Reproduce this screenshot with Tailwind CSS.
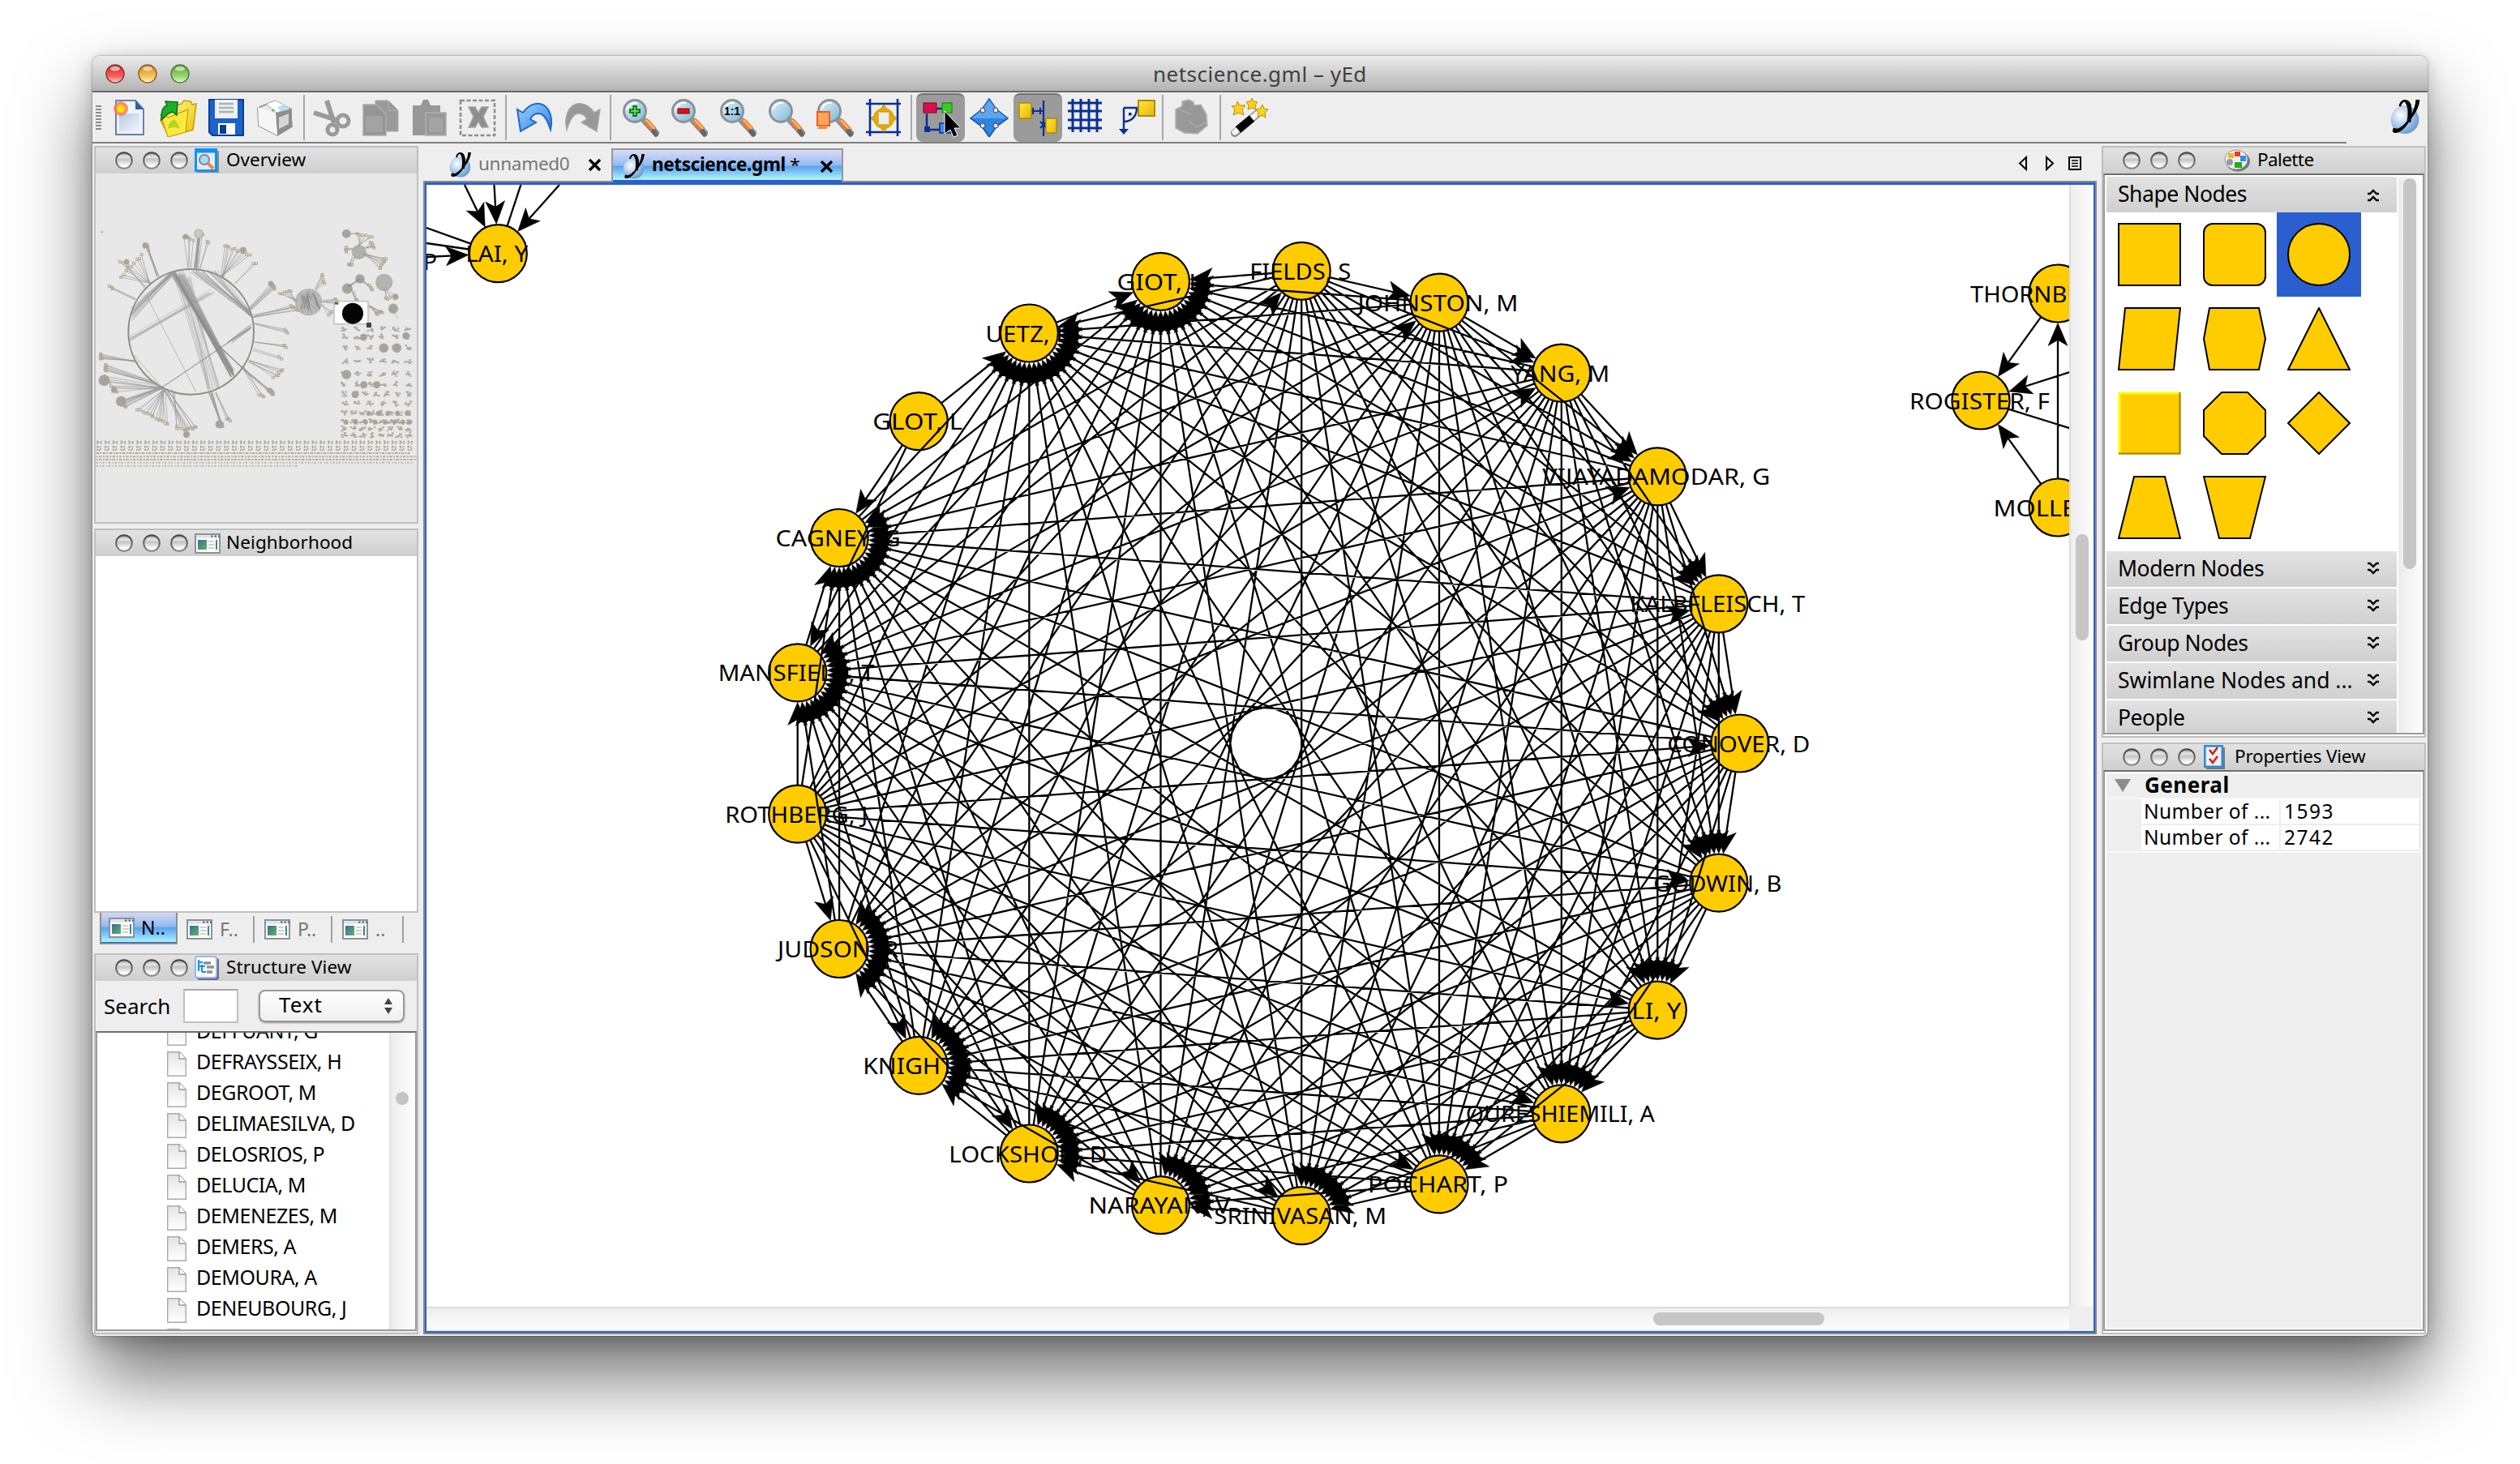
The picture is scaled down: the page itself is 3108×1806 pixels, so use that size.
<!DOCTYPE html>
<html lang="en">
<head>
<meta charset="utf-8">
<title>netscience.gml – yEd</title>
<script src="https://cdn.jsdelivr.net/npm/@tailwindcss/browser@4"></script>
</head>
<body class="bg-white w-[3108px] h-[1806px] overflow-hidden font-['Noto_Sans','Open_Sans',sans-serif] text-black">
<svg class="absolute w-0 h-0">
  <defs>
    <linearGradient id="gRed" x1="0" y1="0" x2="0" y2="1"><stop offset="0" stop-color="#7d1515"/><stop offset=".3" stop-color="#e8403f"/><stop offset=".65" stop-color="#f8605c"/><stop offset="1" stop-color="#ffd8d4"/></linearGradient>
    <linearGradient id="gAmb" x1="0" y1="0" x2="0" y2="1"><stop offset="0" stop-color="#9a5510"/><stop offset=".3" stop-color="#eaa035"/><stop offset=".65" stop-color="#f8c560"/><stop offset="1" stop-color="#fff7c0"/></linearGradient>
    <linearGradient id="gGrn" x1="0" y1="0" x2="0" y2="1"><stop offset="0" stop-color="#3a6f1c"/><stop offset=".3" stop-color="#78bd50"/><stop offset=".65" stop-color="#98d870"/><stop offset="1" stop-color="#e8ffd0"/></linearGradient>
    <linearGradient id="gGray" x1="0" y1="0" x2="0" y2="1"><stop offset="0" stop-color="#8a8a8a"/><stop offset=".25" stop-color="#e6e6e6"/><stop offset=".45" stop-color="#c4c4c4"/><stop offset=".8" stop-color="#fafafa"/><stop offset="1" stop-color="#ffffff"/></linearGradient>
    <linearGradient id="gRing" x1="0" y1="0" x2="0" y2="1"><stop offset="0" stop-color="#444"/><stop offset="1" stop-color="#8a8a8a"/></linearGradient>
    <radialGradient id="gBall" cx=".35" cy=".35" r=".75"><stop offset="0" stop-color="#fff"/><stop offset=".5" stop-color="#a9c8ea"/><stop offset="1" stop-color="#5b93cf"/></radialGradient>
    <linearGradient id="gPage" x1="0" y1="0" x2="1" y2="1"><stop offset="0" stop-color="#b9c8e4"/><stop offset="1" stop-color="#f0f6ff"/></linearGradient>
    <linearGradient id="gFold" x1="0" y1="0" x2="1" y2="1"><stop offset="0" stop-color="#fff9a0"/><stop offset="1" stop-color="#eec400"/></linearGradient>
    <linearGradient id="gLens" x1="0" y1="0" x2="1" y2="1"><stop offset="0" stop-color="#e0f3fa"/><stop offset="1" stop-color="#7cb6d8"/></linearGradient>
    <linearGradient id="gUndo" x1="0" y1="0" x2="1" y2="1"><stop offset="0" stop-color="#9fd4ff"/><stop offset="1" stop-color="#2a7fe0"/></linearGradient>
    <linearGradient id="gYel" x1="0" y1="0" x2="1" y2="1"><stop offset="0" stop-color="#ffe640"/><stop offset="1" stop-color="#e8b800"/></linearGradient>
    <linearGradient id="gDoc" x1="0" y1="0" x2="0" y2="1"><stop offset="0" stop-color="#e4e4e4"/><stop offset="1" stop-color="#fff"/></linearGradient>
    <linearGradient id="gWin" x1="0" y1="0" x2="1" y2="1"><stop offset="0" stop-color="#3a6aa0"/><stop offset="1" stop-color="#5cb860"/></linearGradient>

    <symbol id="dot" viewBox="0 0 22 22"><circle cx="11" cy="11" r="9.8" fill="url(#gGray)" stroke="url(#gRing)" stroke-width="2"/></symbol>
    <symbol id="ylogo" viewBox="0 0 36 42"><circle cx="18" cy="25" r="17" fill="url(#gBall)"/><path d="M12 9c1-6 5-8 9-6 5 3 4 13 3 25" fill="none" stroke="#000" stroke-width="2.6"/><path d="M16 2c9-2 11 6 10 17l-2 8-4 4c2-12 3-24-4-29zM30 1h6c-1 9-5 16-9 21-5 8-10 15-16 18-4 2-7 1-8-1l1-4 5 1c8-3 13-11 17-18 3-6 5-11 5-17z"/></symbol>
    <symbol id="mag" viewBox="0 0 48 48"><path d="M29 28l14 15" stroke="#8a8a8a" stroke-width="8" stroke-linecap="round"/><path d="M27 25l7 8" stroke="#999" stroke-width="5"/><path d="M31 28l10 11" stroke="#f4792a" stroke-width="6.5"/><path d="M31 27l10 11" stroke="#ffc080" stroke-width="2"/><path d="M40 41l3 4" stroke="#666" stroke-width="5.5" stroke-linecap="round"/><circle cx="17" cy="16" r="13.5" fill="url(#gLens)" stroke="#8c9296" stroke-width="3"/><path d="M7 14c2-6 8-9 13-8" fill="none" stroke="#fff" stroke-width="2"/></symbol>
    <symbol id="win" viewBox="0 0 32 25"><rect x="1" y="1" width="30" height="23" fill="#fdfdfd" stroke="#8c9299" stroke-width="2"/><path d="M2 4h28" stroke="#dfe3ea" stroke-width="3.5"/><path d="M20 3.5h2.5m2 0h2.5m2 0h2" stroke="#4c5f85" stroke-width="2"/><rect x="4" y="8" width="11" height="12" fill="url(#gWin)"/><path d="M17 10h7M17 14h8M17 18h7" stroke="#d0d0d0" stroke-width="2"/><path d="M27 8v12" stroke="#3a8a80" stroke-width="2"/></symbol>
    <symbol id="file" viewBox="0 0 24 31"><path d="M.7.7h14.6L23.3 9v21.3H.7z" fill="url(#gDoc)" stroke="#aaa" stroke-width="1.4"/><path d="M15 1v8h8" fill="#fff" stroke="#999" stroke-width="1.3"/></symbol>
    <symbol id="dn" viewBox="0 0 16 18"><path d="M1 2h3l4 4 4-4h3M1 10h3l4 4 4-4h3" fill="none" stroke="#000" stroke-width="2.4"/></symbol>
    <symbol id="x" viewBox="0 0 17 15"><path d="M2 1l13 13M15 1L2 14" stroke="#000" stroke-width="3.4"/></symbol>
  </defs>
</svg>

<div class="ml-[114px] mt-[69px] w-[2880px] h-[1579px] rounded-t-[9px] rounded-b-[6px] bg-[#eeeeee] flex flex-col shadow-[0_50px_92px_rgba(0,0,0,0.56),0_6px_24px_rgba(0,0,0,0.22),0_0_2px_rgba(0,0,0,0.6)]">
  <!-- title bar -->
  <div class="h-[45px] shrink-0 rounded-t-[9px] bg-linear-to-b from-[#ebebeb] to-[#b4b4b4] border-b-2 border-[#6a6a6a] flex items-center relative">
    <div class="flex gap-4 ml-4">
      <svg class="w-6 h-6" viewBox="0 0 24 24"><circle cx="12" cy="12" r="11" fill="url(#gRed)" stroke="#8c3a36" stroke-width="1.5"/><ellipse cx="12" cy="5.5" rx="6" ry="3" fill="#fff" opacity=".6"/></svg>
      <svg class="w-6 h-6" viewBox="0 0 24 24"><circle cx="12" cy="12" r="11" fill="url(#gAmb)" stroke="#94652a" stroke-width="1.5"/><ellipse cx="12" cy="5.5" rx="6" ry="3" fill="#fff" opacity=".6"/></svg>
      <svg class="w-6 h-6" viewBox="0 0 24 24"><circle cx="12" cy="12" r="11" fill="url(#gGrn)" stroke="#56803a" stroke-width="1.5"/><ellipse cx="12" cy="5.5" rx="6" ry="3" fill="#fff" opacity=".6"/></svg>
    </div>
    <div class="ml-[1188px] text-[26px] leading-[34px] tracking-[0.5px] text-[#404040] whitespace-nowrap">netscience.gml – yEd</div>
  </div>

  <!-- tool bar -->
  <div class="h-[62px] shrink-0 flex items-start">
    <div class="w-[2780px] h-[63px] border-b-2 border-[#808080] flex items-center">
      <div class="ml-1 mr-[5px] w-[7px] h-[30px] bg-[repeating-linear-gradient(to_bottom,#8c8c8c_0_2px,transparent_2px_4px)]"></div>
      <div class="flex items-center h-[60px]">
        <div class="flex w-[240px]">
          <svg class="w-12 h-12 ml-2 mr-1" viewBox="0 0 48 48"><path d="M5 3h24l10 11v31H5z" fill="#eef4ff" stroke="#6a7fb0" stroke-width="2"/><rect x="9" y="19" width="25" height="22" fill="url(#gPage)"/><path d="M29 3l10 11H29z" fill="#2f5fa8"/><circle cx="11" cy="13" r="9" fill="#ff7a50" opacity=".85"/><circle cx="11" cy="13" r="5" fill="#ffe000"/></svg>
          <svg class="w-12 h-12 mx-1.5" viewBox="0 0 48 48"><path d="M16 10l12-3 3-4 8 1 2 4 5-1-4 32-30 8-10-20z" fill="url(#gFold)" stroke="#c8a000" stroke-width="1.6"/><path d="M2 20l10 4 24-10-3 28-22 6z" fill="#ffe840" stroke="#c8a000" stroke-width="1.2"/><path d="M3 27c0-10 1-16 7-18L8 4l15 1-1 16-5-4c-5 1-8 4-14 10z" fill="#1fae2c" stroke="#0b6c14" stroke-width="1.5"/><path d="M11 38c1-6 2-9 8-12 4 5 6 8 7 12-6-3-9-2-15 0z" fill="#b0d820"/></svg>
          <svg class="w-12 h-12 mx-1.5" viewBox="0 0 48 48"><path d="M2 2h42v44H6l-4-4z" fill="#1c62c8" stroke="#0a3d94" stroke-width="2"/><rect x="9" y="2" width="28" height="23" fill="#f0f0f0"/><path d="M14 7h18M14 12h18M14 17h18" stroke="#a8b0b8" stroke-width="2.5"/><rect x="13" y="31" width="21" height="14" fill="#fff"/><rect x="15" y="33" width="8" height="11" fill="#0a3d94"/></svg>
          <svg class="w-12 h-12 mx-1.5" viewBox="0 0 48 48"><path d="M2 12l20-8 20 9 2 22-18 11L3 34z" fill="#e8e8e8" stroke="#8c8c8c" stroke-width="1.8"/><path d="M24 18l20-5v22L26 46z" fill="#8e8e8e"/><path d="M28 24l12-5v13l-12 6z" fill="#d6d6d6"/><path d="M2 11l22 8 2 27L3 34z" fill="#f6f6f6"/><path d="M12 7l12-4 18 10-17 5z" fill="#fff" stroke="#aaa"/><path d="M26 11l10-3 4 6-10 2z" fill="#b4e0f0"/><circle cx="21" cy="15" r="1.6" fill="#3c3"/></svg>
        </div>
        <div class="w-2.5 h-14 flex justify-center"><div class="w-0.5 h-14 bg-[#a8a8a8]"></div></div>
        <div class="flex w-[240px]">
          <svg class="w-12 h-12 mx-1.5" viewBox="0 0 48 48"><g stroke="#9a9a9a" fill="none"><path d="M17 3l9 28M1 18l28 9" stroke-width="6"/><circle cx="37" cy="28" r="7" stroke-width="5"/><circle cx="24" cy="39" r="6" stroke-width="5"/></g></svg>
          <svg class="w-12 h-12 mx-1.5" viewBox="0 0 48 48"><path d="M17 3h16l12 12v26H17z" fill="#9a9a9a" stroke="#aaa"/><path d="M2 8h16l12 12v26H2z" fill="#959595" stroke="#adadad" stroke-width="1.5"/><path d="M5 22h21v20H5z" fill="#a3a3a3"/><path d="M33 3v12h12" fill="none" stroke="#b4b4b4"/></svg>
          <svg class="w-12 h-12 mx-1.5" viewBox="0 0 48 48"><path d="M3 9h10l3-7h6l3 7h12v37H3z" fill="#989898"/><rect x="19" y="18" width="25" height="28" fill="#989898" stroke="#b0b0b0" stroke-width="1.6"/><rect x="23" y="24" width="17" height="18" fill="#a4a4a4"/></svg>
          <svg class="w-12 h-12 mx-1.5" viewBox="0 0 48 48"><rect x="2" y="3" width="42" height="43" fill="none" stroke="#8e8e8e" stroke-width="2.6" stroke-dasharray="5 2.5"/><path d="M12 11h8l4 7 4-7h8l-6 12 6 13h-8l-4-7-4 7h-8l6-13z" fill="#8e8e8e" stroke="#a4a4a4" stroke-width="1.5"/></svg>
        </div>
        <div class="w-2 h-14 flex justify-center"><div class="w-0.5 h-14 bg-[#a8a8a8]"></div></div>
        <div class="flex w-[120px]">
          <svg class="w-12 h-12 ml-2 mr-1" viewBox="0 0 48 48"><path d="M2 14l7 4C18 5 32 3 40 14c5 8 5 16 3 25-3-9-7-20-15-20-5 0-8 3-10 7l7 4-19 11z" fill="url(#gUndo)" stroke="#1f68c4" stroke-width="2"/></svg>
          <svg class="w-12 h-12 mx-1.5" viewBox="0 0 48 48"><path d="M46 14l-7 4C30 5 16 3 8 14c-5 8-5 16-3 25 3-9 7-20 15-20 5 0 8 3 10 7l-7 4 19 11z" fill="#989898" stroke="#a8a8a8" stroke-width="1.5"/></svg>
        </div>
        <div class="w-2.5 h-14 flex justify-center"><div class="w-0.5 h-14 bg-[#a8a8a8]"></div></div>
        <div class="flex w-[360px]">
          <svg class="w-12 h-12 ml-2 mr-1" viewBox="0 0 48 48"><use href="#mag"/><path d="M17 9v14M10 16h14" stroke="#0a7a0a" stroke-width="5.5"/><path d="M17 11v10M12 16h10" stroke="#5cdc4c" stroke-width="2"/></svg>
          <svg class="w-12 h-12 ml-2 mr-1" viewBox="0 0 48 48"><use href="#mag"/><rect x="10" y="13" width="14" height="6" fill="#d81414" stroke="#8c0000"/></svg>
          <svg class="w-12 h-12 ml-2 mr-1" viewBox="0 0 48 48"><use href="#mag"/><text x="17" y="21" font-size="14" font-weight="700" text-anchor="middle" font-family="Liberation Sans, sans-serif">1:1</text></svg>
          <svg class="w-12 h-12 ml-2 mr-1" viewBox="0 0 48 48"><use href="#mag"/></svg>
          <svg class="w-12 h-12 ml-2 mr-1" viewBox="0 0 48 48"><use href="#mag"/><rect x="2" y="17" width="15" height="17" fill="#ffa45c" stroke="#e0641c" stroke-width="2"/><path d="M5 34h9v4H2z" fill="#f48a3c"/></svg>
          <svg class="w-12 h-12 ml-2 mr-1" viewBox="0 0 48 48"><path d="M7 1v46M41 1v46M2 7h43M2 42h43" stroke="#0a2f94" stroke-width="2.6"/><path d="M24 8l6 9H18zM24 42l6-9H18zM8 25l9-7v14zM40 25l-9-7v14z" fill="#f5b400" stroke="#b88400"/><circle cx="24" cy="25" r="11.500" fill="none" stroke="#e0a800" stroke-width="3"/></svg>
        </div>
        <div class="w-3 h-14 flex justify-center"><div class="w-0.5 h-14 bg-[#a8a8a8]"></div></div>
        <div class="flex w-[300px] items-center">
          <div class="w-[60px] h-[60px] rounded-lg bg-[#9b9b9b] border-t-2 border-[#707070] flex items-center justify-center"><svg class="w-12 h-12" viewBox="0 0 48 48"><path d="M16 12h12M7 18v20h20" fill="none" stroke="#0a2f94" stroke-width="2.5"/><rect x="3" y="5" width="16" height="12" fill="#d81050" stroke="#800"/><rect x="26" y="5" width="12" height="12" fill="#3ccc20" stroke="#1a7a0a"/><rect x="4" y="34" width="7" height="7" fill="#0a2f94"/><rect x="23" y="30" width="14" height="12" fill="#3c8cf0" stroke="#0a2f94" stroke-width="1.5"/><path d="M29 15v28l7-5 4 9 5-2-4-9h8z" fill="#000" stroke="#fff"/></svg></div>
          <svg class="w-12 h-12 mx-1.5" viewBox="0 0 48 48"><path d="M24 1l9 13 14 11-14 10-9 13-9-13L1 25l14-11z" fill="#2f84e4" stroke="#0f54b0" stroke-width="1.6"/><path d="M24 2l9 12 13 11H2l13-11z" fill="#7cbcf8" opacity=".6"/><g fill="#e4e4e4" stroke="#444"><circle cx="16" cy="15" r="3"/><circle cx="32" cy="15" r="3"/><circle cx="16" cy="34" r="3"/><circle cx="32" cy="34" r="3"/></g></svg>
          <div class="w-[60px] h-[60px] rounded-lg bg-[#9b9b9b] border-t-2 border-[#707070] flex items-center justify-center"><svg class="w-12 h-12" viewBox="0 0 48 48"><path d="M31 2v44M16 15h15M18 11v8M27 11v8M27 28l8 8M35 28l-8 8" stroke="#0a2f94" stroke-width="2.2"/><rect x="1" y="5" width="15" height="19" fill="url(#gYel)" stroke="#b08a00" stroke-width="1.5"/><rect x="34" y="24" width="13" height="18" fill="url(#gYel)" stroke="#b08a00" stroke-width="1.500"/></svg></div>
          <svg class="w-12 h-12 mx-1.5" viewBox="0 0 48 48"><path d="M7 1v41M17 1v41M27 1v41M37 1v41M1 6h42M1 16h42M1 27h42M1 37h42" stroke="#0a2f94" stroke-width="3"/></svg>
          <svg class="w-12 h-12 ml-2 mr-1" viewBox="0 0 48 48"><path d="M8 12v28M8 12h18M8 29c9 0 16-6 16-17" fill="none" stroke="#0a2f94" stroke-width="2.400"/><path d="M2 38h12l-6 7z" fill="#0a2f94"/><rect x="14" y="18" width="3.500" height="3.500" fill="#0a2f94"/><rect x="26" y="3" width="20" height="19" fill="url(#gYel)" stroke="#b08a00" stroke-width="2"/></svg>
        </div>
        <div class="w-2 h-14 flex justify-center"><div class="w-0.5 h-14 bg-[#a8a8a8]"></div></div>
        <svg class="w-12 h-12 ml-2 mr-1.5" viewBox="0 0 48 48"><path d="M4 14l8-4V4l8-2 6 3 1 4 8-1 7 12 1 14-12 10-16-1L4 37z" fill="#989898" stroke="#b4b4b4" stroke-width="1.500"/><path d="M20 28l10 8 12-6M14 5l-4 10 12 4" fill="none" stroke="#aaa" stroke-width="1.500"/></svg>
        <div class="w-2.5 h-14 flex justify-center"><div class="w-0.5 h-14 bg-[#a8a8a8]"></div></div>
        <svg class="w-12 h-12 mx-2" viewBox="0 0 48 48"><path d="M5 43L33 19" stroke="#8a8a8a" stroke-width="10" stroke-linecap="round"/><path d="M5 42L33 19" stroke="#f4f4f4" stroke-width="7" stroke-linecap="round"/><path d="M9 39L26 25" stroke="#000" stroke-width="10"/><path d="M8 4l3 5 7 0-4 5 2 7-6-3-7 3 2-7-4-4 6-1zM26 0l2 4 5 1-3 4 1 5-5-2-5 2 1-5-3-4 5-1zM39 8l2 5 5 1-4 4 1 6-5-3-5 3 1-6-3-4 5-1z" fill="#ffd020" stroke="#c08a00"/></svg>
      </div>
    </div>
    <svg class="w-[38px] h-[43px] ml-[53px] mt-[8px]" viewBox="0 0 36 42"><use href="#ylogo"/></svg>
  </div>

  <!-- body -->
  <div class="flex pt-1 h-[1472px]">
    <!-- left column -->
    <div class="w-[400px] ml-0.5 flex flex-col">
      <section class="h-[466px] border-2 border-[#bfbfbf] bg-[#e8e8e8]">
        <header class="h-8 bg-linear-to-b from-[#e2e2e2] to-[#cfcfcf] flex items-center pl-6">
          <svg class="w-[22px] h-[22px] mr-3"><use href="#dot"/></svg><svg class="w-[22px] h-[22px] mr-3"><use href="#dot"/></svg><svg class="w-[22px] h-[22px] mr-2"><use href="#dot"/></svg>
          <svg class="w-[30px] h-[30px] mr-[9px]" viewBox="0 0 30 30"><rect x="3" y="3" width="27" height="27" fill="#888"/><rect x="1.500" y="1.500" width="25" height="26" fill="#e8e8fc" stroke="#0a94ff" stroke-width="3"/><path d="M0 4h28" stroke="#0a94ff" stroke-width="3"/><circle cx="12" cy="14" r="6" fill="#a8dcf4" stroke="#888" stroke-width="2"/><path d="M17 19l6 6" stroke="#f4843c" stroke-width="4"/></svg>
          <span class="text-[22.5px] leading-8 -mt-0.5">Overview</span>
        </header>
        <svg id="overview" class="w-[396px] h-[430px]" viewBox="24 132 1188 1290" preserveAspectRatio="none"></svg>
      </section>
      <section class="h-[474px] mt-1.5 border-2 border-[#bfbfbf] bg-white">
        <header class="h-8 bg-linear-to-b from-[#e2e2e2] to-[#cfcfcf] flex items-center pl-6">
          <svg class="w-[22px] h-[22px] mr-3"><use href="#dot"/></svg><svg class="w-[22px] h-[22px] mr-3"><use href="#dot"/></svg><svg class="w-[22px] h-[22px] mr-2"><use href="#dot"/></svg>
          <svg class="w-8 h-[25px] mr-[7px]"><use href="#win"/></svg>
          <span class="text-[22.5px] leading-8 tracking-[0.1px] -mt-0.5">Neighborhood</span>
        </header>
      </section>
      <div class="h-[50px] flex pl-[7px] text-[23px] text-[#777]">
        <div class="w-24 h-[39px] border-2 border-t-0 border-[#8e8e8e] bg-[linear-gradient(to_bottom,#d4d8f2_0%,#8fbaf0_46%,#5aa2f0_50%,#a6f2fc_96%,#2b5fd0_96%)] flex items-center pl-[9px] gap-2 text-black"><svg class="w-8 h-[25px]"><use href="#win"/></svg>N..</div>
        <div class="w-[95px] h-[33px] mt-1 border-r-2 border-[#a0a0a0] flex items-center pl-[11px] gap-[9px]"><svg class="w-8 h-[25px]"><use href="#win"/></svg>F..</div>
        <div class="w-24 h-[33px] mt-1 border-r-2 border-[#a0a0a0] flex items-center pl-3 gap-[9px]"><svg class="w-8 h-[25px]"><use href="#win"/></svg>P..</div>
        <div class="w-[88px] h-[33px] mt-1 border-r-2 border-[#a0a0a0] flex items-center pl-3 gap-[9px]"><svg class="w-8 h-[25px]"><use href="#win"/></svg>..</div>
      </div>
      <section class="h-[470px] border-2 border-[#bfbfbf]">
        <header class="h-8 bg-linear-to-b from-[#e2e2e2] to-[#cfcfcf] flex items-center pl-6">
          <svg class="w-[22px] h-[22px] mr-3"><use href="#dot"/></svg><svg class="w-[22px] h-[22px] mr-3"><use href="#dot"/></svg><svg class="w-[22px] h-[22px] mr-2"><use href="#dot"/></svg>
          <svg class="w-[30px] h-[30px] mr-[9px]" viewBox="0 0 30 30"><rect x="3" y="3" width="27" height="27" rx="3" fill="#666c8c"/><rect x="1" y="1" width="26" height="26" rx="3" fill="#fff" stroke="#9cb4ec" stroke-width="2"/><path d="M5 5v14M5 8h5M9 11v9M5 13h8M9 20h5" fill="none" stroke="#1490f0" stroke-width="2.200"/><path d="M11 9h9M15 14h9M15 20h7" stroke="#909090" stroke-width="3.500"/></svg>
          <span class="text-[22.5px] leading-8 tracking-[0.1px] -mt-0.5">Structure View</span>
        </header>
        <div class="h-[62px] flex items-center pl-2.5">
          <span class="text-[26px] tracking-[0px] w-[98px]">Search</span>
          <div class="w-[68px] h-[42px] bg-white border-2 border-[#c0c0c0] border-t-[#a8a8a8]"></div>
          <div class="ml-[25px] w-[180px] h-10 rounded-lg border-2 border-[#9a9a9a] bg-linear-to-b from-white to-[#f0f0f0] shadow-[0_1px_2px_rgba(0,0,0,0.4)] flex items-center justify-between pl-[23px] pr-3 text-[26px] tracking-[1px]"><span class="-mt-1">Text</span>
            <svg class="w-3 h-6" viewBox="0 0 12 24"><path d="M6 2l5 8H1zM6 22l5-8H1z" fill="#444"/></svg>
          </div>
        </div>
        <div class="h-[370px] w-[396px] border-2 border-t-[#6e6e6e] border-[#9c9c9c] bg-white flex overflow-hidden">
          <div id="authors" class="w-[360px] h-full -mt-[19px] flex flex-col text-[25px]"></div>
          <div class="w-[30px] h-full bg-linear-to-r from-[#ececec] to-[#fdfdfd] border-l-2 border-[#e0e0e0] pt-[73px] pl-1.5"><div class="w-4 h-4 rounded-full bg-[#c4c4c4]"></div></div>
        </div>
      </section>
    </div>

    <!-- editor -->
    <div class="w-[2064px] ml-1.5 flex flex-col">
      <div class="h-[43px] flex pt-[3px] items-start">
        <div class="flex items-center h-[40px] pl-8 w-[232px]">
          <svg class="w-[27px] h-[32px]" viewBox="0 0 36 42"><use href="#ylogo"/></svg>
          <span class="ml-[9px] text-[22.5px] text-[#777] w-[135px] tracking-[-0.3px] -mt-0.5">unnamed0</span><svg class="w-[17px] h-[15px]"><use href="#x"/></svg>
        </div>
        <div class="flex items-center h-[42px] pl-3 w-[286px] border-2 border-b-0 border-[#979797] bg-[linear-gradient(to_bottom,#dcdcf6_0%,#93baf0_47%,#5ba2f0_51%,#aef6fc_92%,#2b5fd0_93%)] z-10">
          <svg class="w-[27px] h-[32px]" viewBox="0 0 36 42"><use href="#ylogo"/></svg>
          <span class="ml-[9px] text-[22.500px] font-bold w-[207px] tracking-[-0.35px] -mt-1 whitespace-nowrap">netscience.gml <span class="font-normal">*</span></span><svg class="w-[17px] h-[15px]"><use href="#x"/></svg>
        </div>
        <svg class="w-[80px] h-5 ml-[1449px] mt-2" viewBox="0 0 80 20"><path d="M10 3v15L2 10.500zM35 3v15l8-7.500z" fill="none" stroke="#000" stroke-width="2"/><rect x="63" y="3" width="14" height="15" fill="none" stroke="#000" stroke-width="2"/><path d="M66 7h8M66 10.500h8M66 14h8" stroke="#000" stroke-width="1.600"/></svg>
      </div>
      <div class="h-[1423px] border-2 border-[#8a8a8a]">
        <div class="h-full border-2 border-t-[3px] border-[#2b5fd0] bg-[#eeeeee]">
          <div class="flex h-[1384px]">
            <svg id="graph" class="w-[2026px] h-[1384px] bg-white" viewBox="526 228 2026 1384"></svg>
            <div class="w-[30px] h-full bg-linear-to-r from-[#ededed] to-[#fdfdfd] border-l-2 border-[#dedede] pt-[431px] pl-1.5"><div class="w-4 h-[131px] rounded-full bg-[#c6c6c6]"></div></div>
          </div>
          <div class="h-[28px] w-[2026px] border-t-2 border-[#dcdcdc] bg-linear-to-b from-[#eeeeee] to-[#fdfdfd] pt-[5px] pl-[1513px]"><div class="w-[211px] h-4 rounded-full bg-[#c6c6c6]"></div></div>
        </div>
      </div>
    </div>

    <!-- right column -->
    <div class="w-[400px] ml-1.5 flex flex-col">
      <section class="h-[730px] border-2 border-[#bfbfbf] bg-white">
        <header class="h-8 bg-linear-to-b from-[#e2e2e2] to-[#cfcfcf] flex items-center pl-6">
          <svg class="w-[22px] h-[22px] mr-3"><use href="#dot"/></svg><svg class="w-[22px] h-[22px] mr-3"><use href="#dot"/></svg><svg class="w-[22px] h-[22px] mr-[35px]"><use href="#dot"/></svg>
          <svg class="w-8 h-7 mr-[9px]" viewBox="0 0 32 28"><ellipse cx="17" cy="15" rx="15" ry="12.500" fill="#777"/><ellipse cx="15" cy="13" rx="14" ry="12" fill="#f0f0f0" stroke="#999"/><rect x="5" y="5" width="7" height="6" fill="#f0b81c"/><rect x="13" y="3" width="7" height="6" fill="#f03c1c"/><rect x="20" y="8" width="7" height="7" fill="#2c90f0"/><rect x="13" y="16" width="9" height="7" fill="#1cae1c"/><circle cx="7" cy="16" r="4" fill="#999"/></svg>
          <span class="text-[22.5px] leading-8 tracking-[-0.6px] -mt-0.5">Palette</span>
        </header>
        <div class="h-[692px] border-2 border-t-[#6e6e6e] border-[#9c9c9c] flex pt-0.5 pl-0.5 overflow-hidden">
          <div class="w-[358px] flex flex-col gap-0.5 text-[26.5px] tracking-[-0.45px]">
            <div>
              <div class="h-11 bg-linear-to-b from-[#e2e2e2] to-[#d0d0d0] flex items-center justify-between pl-[14px] pr-[21px]">Shape Nodes<svg class="w-4 h-[18px] rotate-180"><use href="#dn"/></svg></div>
              <div id="shapes" class="h-[416px] w-[314px] grid grid-cols-3"></div>
            </div>
            <div class="h-11 shrink-0 bg-linear-to-b from-[#e2e2e2] to-[#d0d0d0] flex items-center justify-between pl-[14px] pr-[21px]">Modern Nodes<svg class="w-4 h-[18px]"><use href="#dn"/></svg></div>
            <div class="h-11 shrink-0 bg-linear-to-b from-[#e2e2e2] to-[#d0d0d0] flex items-center justify-between pl-[14px] pr-[21px]">Edge Types<svg class="w-4 h-[18px]"><use href="#dn"/></svg></div>
            <div class="h-11 shrink-0 bg-linear-to-b from-[#e2e2e2] to-[#d0d0d0] flex items-center justify-between pl-[14px] pr-[21px]">Group Nodes<svg class="w-4 h-[18px]"><use href="#dn"/></svg></div>
            <div class="h-11 shrink-0 bg-linear-to-b from-[#e2e2e2] to-[#d0d0d0] flex items-center justify-between pl-[14px] pr-[21px] tracking-[0px]">Swimlane Nodes and ...<svg class="w-4 h-[18px]"><use href="#dn"/></svg></div>
            <div class="h-11 shrink-0 bg-linear-to-b from-[#e2e2e2] to-[#d0d0d0] flex items-center justify-between pl-[14px] pr-[21px]">People<svg class="w-4 h-[18px]"><use href="#dn"/></svg></div>
          </div>
          <div class="w-[30px] h-full bg-linear-to-r from-[#ececec] to-[#fdfdfd] pt-0.5 pl-1.5 ml-0.5"><div class="w-4 h-[482px] rounded-full bg-[#c6c6c6]"></div></div>
        </div>
      </section>
      <section class="h-[730px] mt-1.5 border-2 border-[#bfbfbf] bg-white">
        <header class="h-8 bg-linear-to-b from-[#e2e2e2] to-[#cfcfcf] flex items-center pl-6">
          <svg class="w-[22px] h-[22px] mr-3"><use href="#dot"/></svg><svg class="w-[22px] h-[22px] mr-3"><use href="#dot"/></svg><svg class="w-[22px] h-[22px] mr-[10px]"><use href="#dot"/></svg>
          <svg class="w-[26px] h-[30px] mr-[12px]" viewBox="0 0 26 30"><rect x="3" y="3" width="23" height="27" fill="#777"/><rect x="1.300" y="1.300" width="21.500" height="25.500" fill="#f0f0f0" stroke="#2c8cdc" stroke-width="2.600"/><path d="M7 6l4 5 6-8M7 17l4 5 6-8" fill="none" stroke="#d41c1c" stroke-width="2.600"/></svg>
          <span class="text-[22.5px] leading-8 tracking-[-0.2px] -mt-0.5">Properties View</span>
        </header>
        <div class="h-[692px] border-2 border-t-[#6e6e6e] border-[#9c9c9c] p-0.5">
          <div class="h-full bg-[#eeeeee] text-[26px]">
            <div class="h-8 flex items-center border-b-2 border-[#f8f8f8]"><svg class="w-5 h-4 ml-2.5" viewBox="0 0 20 16"><path d="M0 0h20L10 16z" fill="#8c8c8c"/></svg><b class="ml-[17px] text-[26px] tracking-[0.5px] -mt-0.5">General</b></div>
            <div class="h-8 pb-0.5 flex pl-[43px] gap-0.5 text-[24.5px]"><div class="w-[170px] bg-white flex items-center pl-[3px] tracking-[0.4px]">Number of ...</div><div class="w-[170px] bg-white flex items-center pl-1 tracking-[1.5px]">1593</div></div>
            <div class="h-8 pb-0.5 flex pl-[43px] gap-0.5 text-[24.5px]"><div class="w-[170px] bg-white flex items-center pl-[3px] tracking-[0.4px]">Number of ...</div><div class="w-[170px] bg-white flex items-center pl-1 tracking-[1.5px]">2742</div></div>
            <div class="h-0.5 bg-[#fafafa]"></div>
          </div>
        </div>
      </section>
    </div>
  </div>
</div>

<script>
// Structure view: one row per author
const authors = ['DEFFUANT, G','DEFRAYSSEIX, H','DEGROOT, M','DELIMAESILVA, D','DELOSRIOS, P','DELUCIA, M','DEMENEZES, M','DEMERS, A','DEMOURA, A','DENEUBOURG, J','DENNIS, S'];
document.getElementById('authors').innerHTML = authors.map(a =>
  `<div class="h-[38px] shrink-0 flex items-center pl-[86px] gap-3 tracking-[-0.45px]"><svg class="w-6 h-[31px]"><use href="#file"/></svg><span class="-mt-1">${a}</span></div>`).join('');

// Palette shapes on a 78x78 box
const S = 'fill="#ffcc00" stroke="#000" stroke-width="2"';
const shapes = [
  `<rect x="1" y="1" width="76" height="76" ${S}/>`,
  `<rect x="1" y="1" width="76" height="76" rx="11" ${S}/>`,
  `<circle cx="39" cy="39" r="38" ${S}/>`,
  `<path d="M9 1h68l-8 76H1z" ${S}/>`,
  `<path d="M8 1h61l8 38-8 38H8L1 39z" ${S}/>`,
  `<path d="M39 1l38 76H1z" ${S}/>`,
  `<rect x="1" y="1" width="76" height="76" fill="#ffcc00"/><path d="M2 77V2h75" fill="none" stroke="#ffff00" stroke-width="3"/><path d="M1 76.500h75.500V1" fill="none" stroke="#b38f00" stroke-width="2.500"/>`,
  `<path d="M23 1h32l22 22v32L55 77H23L1 55V23z" ${S}/>`,
  `<path d="M39 1l38 38-38 38L1 39z" ${S}/>`,
  `<path d="M20 1h38l19 76H1z" ${S}/>`,
  `<path d="M1 1h76L58 77H20z" ${S}/>`];
document.getElementById('shapes').innerHTML = shapes.map((s, i) =>
  `<div class="w-[104px] h-[104px] p-[13px] ml-[1px] ${i === 2 ? 'bg-[#2b5fd0]' : ''}"><svg class="w-[78px] h-[78px]" viewBox="0 0 78 78">${s}</svg></div>`).join('');

// Graph: circular component
const CX = 1561.5, CY = 917, R = 584.3, NR = 35.5;
const ring = [['CONOVER, D',176],['KALBFLEISCH, T',216],['VIJAYADAMODAR, G',281],['YANG, M',122],['JOHNSTON, M',198],['FIELDS, S',125],['GIOT, L',105],['UETZ, P',105],['GLOT, L',111],['CAGNEY, G',154],['MANSFIELD, T',193],['ROTHBERG, J',176],['JUDSON, R',149],['KNIGHT, J',135],['LOCKSHON, D',195],['NARAYAN, V',175],['SRINIVASAN, M',213],['POCHART, P',173],['QURESHIEMILI, A',233],['LI, Y',61],['GODWIN, B',158]];
const nodes = ring.map(([name, w], k) => { const a = 2 * Math.PI * k / 21; return { name, w, x: CX + R * Math.cos(a), y: CY - R * Math.sin(a) }; });
let edges = '', heads = '', circles = '', labels = '';
const n1 = v => v.toFixed(1);
function head(tx, ty, ux, uy) {
  const p = (l, w) => n1(tx - ux * l - uy * w) + ' ' + n1(ty - uy * l + ux * w);
  heads += `M${p(0,0)}L${p(28,12)}L${p(21,0)}L${p(28,-12)}Z`;
}
function edge(a, b, arrow = true) {
  const dx = b.x - a.x, dy = b.y - a.y, d = Math.hypot(dx, dy), ux = dx / d, uy = dy / d;
  const ra = a.free ? 0 : NR, rb = b.free ? 0 : NR + 1, end = rb + (arrow ? 18 : 0);
  edges += `M${n1(a.x + ux * ra)} ${n1(a.y + uy * ra)}L${n1(b.x - ux * end)} ${n1(b.y - uy * end)}`;
  if (arrow) head(b.x - ux * rb, b.y - uy * rb, ux, uy);
}
const order = [11,5,4,3,2,1,0,20,19,18,17,16,15,14,13,12,10,9,7,6];
for (let i = 0; i < order.length; i++) for (let j = i + 1; j < order.length; j++) edge(nodes[order[i]], nodes[order[j]]);
[7, 9, 10].forEach(k => edge(nodes[8], nodes[k]));
// Neighbouring components, partly outside the view
const lai = { name: 'LAI, Y', w: 77, x: 614.3, y: 312.7 }, rog = { name: 'ROGISTER, F', w: 173, x: 2443, y: 494 },
  tho = { name: 'THORNBURG, K', w: 213, x: 2538, y: 362 }, mol = { name: 'MOLLER, P', w: 156, x: 2538, y: 626 };
const off = (x, y) => ({ x, y, free: true });
edge(off(573, 228), lai); edge(off(609.5, 228), lai); edge(off(645, 220), lai, false); edge(off(690, 228), lai);
edge(off(526, 281), lai, false); edge(off(526, 300), lai, false); edge(off(526, 317), lai);
edge(tho, rog); edge(mol, rog); edge(mol, tho); edge(off(2600, 444), rog); edge(off(2600, 543), rog, false);
for (const n of [...nodes, lai, rog, tho, mol]) {
  circles += `<circle cx="${n1(n.x)}" cy="${n1(n.y)}" r="${NR}"/>`;
  labels += `<text x="${n1(n.x - n.w / 2 - 1.5)}" y="${n1(n.y + 10.5)}" textLength="${n.w}" lengthAdjust="spacingAndGlyphs">${n.name}</text>`;
}
document.getElementById('graph').innerHTML =
  `<g fill="#ffcc00" stroke="#000" stroke-width="2.2">${circles}</g><path d="${edges}" fill="none" stroke="#000" stroke-width="2.3"/><path d="${heads}" stroke="#000" stroke-width=".5"/><g font-size="28" font-family="Noto Sans, sans-serif">${labels}<text x="522" y="333">P</text></g>`;

// Overview thumbnail
let seed = 7; const rnd = () => (seed = (seed * 16807) % 2147483647) / 2147483647;
let o = '';
const ln = (a, b, c, d, s = '#999', w = 2.6, op = .7) => o += `<path d="M${n1(a)} ${n1(b)}L${n1(c)} ${n1(d)}" stroke="${s}" stroke-width="${w}" opacity="${op}"/>`;
const blob = (x, y, r, f = '#a4a49e') => o += `<circle cx="${x}" cy="${y}" r="${r}" fill="${f}" stroke="#aaa48e" stroke-width="4" stroke-dasharray="4 3"/>`;
const fan = (x, y, x1, y1, x2, y2, n) => { for (let i = 0; i < n; i++) { const t = n > 1 ? i / (n - 1) : 0, ex = x1 + (x2 - x1) * t + rnd() * 8, ey = y1 + (y2 - y1) * t + rnd() * 8; ln(x + rnd() * 14 - 7, y + rnd() * 10 - 5, ex, ey); o += `<rect x="${n1(ex - 4)}" y="${n1(ey - 4)}" width="9" height="8" fill="none" stroke="#b3ac94" stroke-width="3"/>`; } };
o += '<circle cx="377" cy="718" r="232" fill="none" stroke="#8e8e82" stroke-width="6"/>';
fan(255,512,205,385,212,410,6); fan(225,538,110,510,190,430,9); fan(170,598,72,545,80,555,3); fan(215,560,105,455,135,465,3);
fan(370,485,350,365,378,372,4); fan(395,485,398,350,412,352,12); fan(412,488,430,380,434,385,2); fan(490,515,495,395,590,430,11); fan(535,538,600,458,610,465,2);
fan(598,635,672,535,680,555,8); fan(605,662,745,620,765,632,6); fan(608,685,720,705,728,715,3); fan(608,752,718,765,722,770,3); fan(604,785,700,808,704,812,2); fan(590,825,710,855,680,885,6);
fan(565,850,668,935,675,945,7); fan(565,850,625,950,640,955,3); fan(448,940,478,1055,490,1065,9); fan(465,940,505,1035,515,1040,3);
fan(285,932,345,1080,392,1068,9); fan(275,932,175,1000,285,1055,14); fan(268,925,110,970,130,990,11); fan(268,925,50,880,95,935,8); fan(245,910,55,835,60,860,7); fan(175,828,38,795,42,815,6); fan(310,935,318,1065,330,1075,3);
for (let i = 0; i < 44; i++) ln(300 + rnd() * 50, 492 + rnd() * 22, 525 + rnd() * 12, 860 + rnd() * 25, '#929292', 2.2, .55);
for (let i = 0; i < 18; i++) ln(315 + rnd() * 60, 500 + rnd() * 30, 440 + rnd() * 50, 935 - rnd() * 10, '#a4a4a4', 2.2, .55);
for (let i = 0; i < 20; i++) ln(300 + rnd() * 20, 495 + rnd() * 10, 150 + rnd() * 12, 630 + rnd() * 50, '#959595', 2.2, .65);
for (let i = 0; i < 26; i++) ln(370 + rnd() * 110, 488 + rnd() * 10, 598, 640 + rnd() * 24, '#959595', 2.2, .6);
for (let i = 0; i < 8; i++) ln(150, 735 + rnd() * 20, 430 + rnd() * 40, 560 + rnd() * 20, '#a0a0a0', 2.2, .6);
ln(268,925,600,700,'#909090',3.5,.8); ln(315,498,525,885,'#808080',5,.8); ln(480,770,565,850,'#808080',4,.9); ln(270,925,158,795); ln(215,590,395,940); ln(380,490,600,650); ln(200,590,330,490);
for (let i = 0; i < 8; i++) ln(510 + rnd() * 20, 750 + rnd() * 12, 598, 690 + rnd() * 20);
blob(405,355,16,'#c8c8c4'); blob(357,366,9); blob(207,400,9); blob(138,459,9); blob(55,898,19); blob(92,934,10); blob(118,975,18); blob(482,1060,14); blob(360,1098,11); blob(668,935,9); blob(570,415,10); blob(672,540,9);
blob(812,608,48,'#bababa'); for (let i = 0; i < 22; i++) ln(780 + rnd() * 60, 568 + rnd() * 20, 775 + rnd() * 80, 620 + rnd() * 30, '#888');
fan(835,560,855,500,868,535,5); fan(860,605,905,592,912,612,5); fan(765,605,705,575,740,560,6); fan(860,620,885,650,890,640,3);
blob(952,355,15); blob(998,423,25,'#b0b0ac'); ln(965,355,1000,355,'#999',4); fan(998,400,985,350,1040,360,6); fan(1020,430,1075,480,1090,440,8); fan(980,440,955,465,965,470,4); fan(975,410,945,405,950,415,4); fan(1020,410,1050,405,1040,380,5);
blob(955,558,18); blob(1002,522,16); ln(960,550,1002,522,'#888',6); fan(975,560,980,600,985,595,4); fan(1005,525,1035,545,1040,555,4);
blob(1091,535,30,'#b4b4b0'); fan(1095,560,1090,590,1135,587,5); blob(1133,588,10); blob(1125,632,17); fan(1035,620,1060,650,1080,640,7); ln(1125,640,1143,668);
o += '<rect x="906" y="605" width="126" height="84" fill="#fff" stroke="#c4c4c4" stroke-width="5"/><circle cx="975" cy="650" r="39" fill="#050505"/><rect x="1026" y="684" width="18" height="18" fill="#444"/><rect x="908" y="608" width="14" height="9" fill="#6c6018"/>';
const rows = [[710,6],[738,6],[778,6],[828,6],[876,6],[914,6],[950,7],[986,6],[1020,8],[1052,8],[1078,8],[1102,8]];
for (const [y, n] of rows) for (let i = 0; i < n; i++) { const x = 945 + i * 235 / (n - 1 || 1), s = 11;
  for (let j = 0; j < 6; j++) { const px = x + rnd() * 2 * s - s, py = y + rnd() * 1.6 * s - s; ln(x, y, px, py, '#999', 2.5, .85); o += `<rect x="${n1(px - 4)}" y="${n1(py - 3)}" width="8" height="6" fill="#b4af9c"/>`; } }
[[1090,778],[1138,778],[952,876]].forEach(p => blob(p[0], p[1], 16)); [[1016,914],[1064,914],[984,950],[1015,738],[1172,733]].forEach(p => blob(p[0], p[1], 12));
[[1034,1020],[1070,1020],[1105,1020],[1140,1020],[1178,1020],[950,1052],[986,1052],[1022,1052],[1058,1052],[1095,1052],[1130,1052],[1160,1052],[1186,1052]].forEach(p => blob(p[0], p[1], 8));
for (let x = 30; x < 1205; x += 29.5) o += `<path d="M${x} 1120v14m0-7h14m0-5v12M${x} 1142v14h12v-12z" fill="none" stroke="#aaa694" stroke-width="5" stroke-dasharray="6 3"/>`;
o += '<path d="M26 1167h1160" stroke="#b0ab96" stroke-width="6" stroke-dasharray="11 4 5 4"/><path d="M26 1180h1186M26 1191h1186" stroke="#b4af9c" stroke-width="6" stroke-dasharray="6 4 10 5"/><path d="M26 1202h1174M26 1214h750" stroke="#b8b3a0" stroke-width="6" stroke-dasharray="7 7 4 5"/><rect x="42" y="345" width="9" height="7" fill="#c0bbaa"/>';
document.getElementById('overview').innerHTML = o;
</script>
</body>
</html>
